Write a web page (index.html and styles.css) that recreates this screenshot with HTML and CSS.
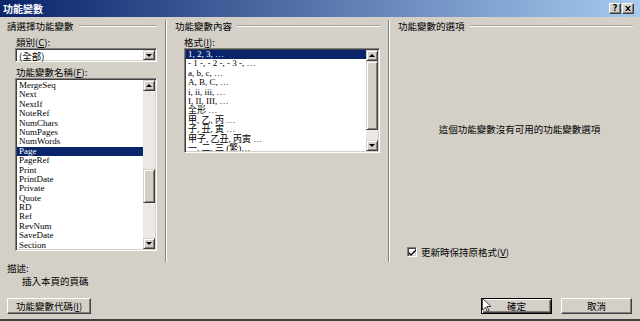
FILE: index.html
```html
<!DOCTYPE html>
<html lang="zh-Hant">
<head>
    <meta charset="UTF-8">
    <title>功能變數</title>
    <link rel="stylesheet" href="styles.css">
</head>
<body>
    <div class="dialog">
        <div class="titlebar">
            <span class="title">功能變數</span>
            <span class="cbtn cbtn-help">?</span>
            <span class="cbtn">
                <svg width="6" height="5" viewBox="0 0 6 5"><path d="M0 0h1.5l1.5 1.5l1.5-1.5h1.5l-2.2 2.5l2.2 2.5h-1.5l-1.5-1.5l-1.5 1.5h-1.5l2.2-2.5z" fill="#000"/></svg>
            </span>
        </div>

        <div class="panes">
            <!-- left: pick a field -->
            <section class="pane pane-pick">
                <div class="group-head"><span>請選擇功能變數</span><i class="etch"></i></div>
                <div class="field-label">類別(<u>C</u>):</div>
                <div class="combo well">
                    <span class="combo-text">(全部)</span>
                    <span class="sb-btn raised"><i class="arrow-down"></i></span>
                </div>
                <div class="field-label field-label-2">功能變數名稱(<u>F</u>):</div>
                <div class="listbox well names">
                    <ul class="items">
                        <li>MergeSeq</li>
                        <li>Next</li>
                        <li>NextIf</li>
                        <li>NoteRef</li>
                        <li>NumChars</li>
                        <li>NumPages</li>
                        <li>NumWords</li>
                        <li class="selected">Page</li>
                        <li>PageRef</li>
                        <li>Print</li>
                        <li>PrintDate</li>
                        <li>Private</li>
                        <li>Quote</li>
                        <li>RD</li>
                        <li>Ref</li>
                        <li>RevNum</li>
                        <li>SaveDate</li>
                        <li>Section</li>
                    </ul>
                    <div class="vscroll">
                        <span class="sb-btn raised"><i class="arrow-up"></i></span>
                        <span class="sb-track"><span class="sb-thumb raised thumb-names"></span></span>
                        <span class="sb-btn raised"><i class="arrow-down"></i></span>
                    </div>
                </div>
            </section>

            <div class="vsep"></div>

            <!-- middle: field properties -->
            <section class="pane pane-props">
                <div class="group-head"><span>功能變數內容</span><i class="etch"></i></div>
                <div class="field-label">格式(<u>I</u>):</div>
                <div class="listbox well formats">
                    <ul class="items">
                        <li class="selected">1, 2, 3, …</li>
                        <li>- 1 -, - 2 -, - 3 -, …</li>
                        <li>a, b, c, …</li>
                        <li>A, B, C, …</li>
                        <li>i, ii, iii, …</li>
                        <li>I, II, III, …</li>
                        <li>全形 …</li>
                        <li>甲, 乙, 丙 …</li>
                        <li>子, 丑, 寅 …</li>
                        <li>甲子, 乙丑, 丙寅 …</li>
                        <li>一, 二, 三 (繁)…</li>
                    </ul>
                    <div class="vscroll">
                        <span class="sb-btn raised"><i class="arrow-up"></i></span>
                        <span class="sb-track"><span class="sb-thumb raised thumb-formats"></span></span>
                        <span class="sb-btn raised"><i class="arrow-down"></i></span>
                    </div>
                </div>
            </section>

            <div class="vsep"></div>

            <!-- right: field options -->
            <section class="pane pane-opts">
                <div class="group-head"><span>功能變數的選項</span><i class="etch"></i></div>
                <p class="no-options">這個功能變數沒有可用的功能變數選項</p>
                <label class="check-row">
                    <span class="check well">
                        <svg width="7" height="7" viewBox="0 0 7 7"><path d="M0 3l2 2l5-5v2l-5 5l-2-2z" fill="#000"/></svg>
                    </span>
                    <span>更新時保持原格式(<u>V</u>)</span>
                </label>
            </section>
        </div>

        <div class="desc">
            <div>描述:</div>
            <div class="desc-text">插入本頁的頁碼</div>
        </div>

        <div class="actions">
            <span class="btn btn-codes"><span>功能變數代碼(<u>I</u>)</span></span>
            <span class="btn btn-default">確定</span>
            <span class="btn">取消</span>
        </div>

        <svg class="cursor" width="9" height="14" viewBox="0 0 12 19">
            <path d="M0.5 0.5v16l4-4l3 6l2-1l-3-6h5.5z" fill="#fff" stroke="#000" stroke-width="1"/>
        </svg>
    </div>
</body>
</html>
```

FILE: styles.css
```css
* {
    margin: 0;
    padding: 0;
    box-sizing: border-box;
}

body {
    background: #d4d0c8;
}

ul {
    list-style: none;
}

.dialog {
    position: relative;
    width: 640px;
    height: 321px;
    display: flex;
    flex-direction: column;
    background: #d4d0c8;
    border-bottom: 2px solid #404040;
    font-family: "Noto Sans CJK TC", "Liberation Sans", sans-serif;
    font-size: 9.5px;
    color: #000;
}

/* title bar */
.titlebar {
    flex: none;
    height: 17px;
    display: flex;
    align-items: center;
    padding: 0 6px 0 3px;
    background: linear-gradient(90deg, #0a246a 0%, #a6caf0 100%);
}

.title {
    flex: 1;
    color: #fff;
    font-weight: bold;
    font-size: 10px;
    line-height: 12px;
}

.cbtn {
    width: 12px;
    height: 11px;
    display: flex;
    align-items: center;
    justify-content: center;
    background: #d4d0c8;
    border: 1px solid;
    border-color: #fff #404040 #404040 #fff;
    box-shadow: inset -1px -1px #808080;
    font: bold 8px "DejaVu Sans", sans-serif;
    line-height: 1;
}

.cbtn-help {
    margin-right: 1px;
}

/* three panes */
.panes {
    flex: none;
    display: flex;
    height: 242px;
    margin-top: 3px;
}

.pane {
    display: flex;
    flex-direction: column;
    padding: 0 8px;
}

.pane-pick {
    width: 165px;
    padding-left: 7px;
}

.pane-props {
    width: 221px;
}

.pane-opts {
    flex: 1;
    padding-right: 7px;
}

.vsep {
    width: 0;
    border-left: 1px solid #808080;
    border-right: 1px solid #fff;
}

.group-head {
    display: flex;
    align-items: center;
    height: 12px;
    line-height: 12px;
    white-space: nowrap;
}

.etch {
    flex: 1;
    margin-left: 5px;
    border-top: 1px solid #a0a0a0;
    border-bottom: 1px solid #fff;
}

.field-label {
    margin: 5px 0 0 9px;
    line-height: 11px;
}

.field-label-2 {
    margin-top: 4px;
    line-height: 12px;
}

u {
    text-decoration: underline;
    text-underline-offset: 1px;
}

/* sunken field */
.well {
    background: #fff;
    border: 1px solid;
    border-color: #808080 #fff #fff #808080;
    padding: 1px;
    box-shadow: inset 1px 1px #404040, inset -1px -1px #d4d0c8;
}

.raised {
    background: #d4d0c8;
    border: 1px solid;
    border-color: #d4d0c8 #404040 #404040 #d4d0c8;
    box-shadow: inset 1px 1px #fff, inset -1px -1px #808080;
}

.combo {
    display: flex;
    align-items: center;
    height: 14px;
    margin-left: 8px;
}

.combo-text {
    flex: 1;
    padding: 1px 0 0 2px;
    line-height: 10px;
}

.sb-btn {
    flex: none;
    width: 12px;
    height: 11px;
    display: flex;
    align-items: center;
    justify-content: center;
}

.combo .sb-btn {
    height: 10px;
}

.arrow-up,
.arrow-down {
    width: 0;
    height: 0;
    border-left: 3px solid transparent;
    border-right: 3px solid transparent;
}

.arrow-up {
    border-bottom: 3px solid #000;
}

.arrow-down {
    border-top: 3px solid #000;
}

/* list boxes */
.listbox {
    display: flex;
    overflow: hidden;
}

.names {
    height: 173px;
    margin-left: 8px;
}

.formats {
    height: 105px;
    margin-left: 9px;
}

.items {
    flex: 1;
    overflow: hidden;
    font-family: "Liberation Serif", "Noto Sans CJK TC", serif;
    font-size: 9px;
}

.names .items {
    padding-top: 1px;
}

.items li {
    height: 9.4px;
    line-height: 9.4px;
    padding-left: 2px;
    white-space: nowrap;
}

.items li.selected {
    background: #0a246a;
    color: #fff;
}

.vscroll {
    flex: none;
    width: 12px;
    display: flex;
    flex-direction: column;
}

.sb-track {
    flex: 1;
    display: flex;
    flex-direction: column;
    background: #ebe9e4;
}

.sb-thumb {
    display: block;
}

.thumb-names {
    margin-top: 78px;
    height: 34px;
}

.thumb-formats {
    height: 69px;
}

/* options pane */
.no-options {
    margin-top: 91px;
    padding-left: 8px;
    line-height: 12px;
    text-align: center;
}

.check-row {
    display: flex;
    align-items: center;
    gap: 4px;
    margin: auto 0 4px 9px;
    line-height: 12px;
}

.check {
    width: 10px;
    height: 10px;
    display: flex;
    align-items: center;
    justify-content: center;
    padding: 0;
}

/* description */
.desc {
    padding-left: 7px;
    line-height: 12px;
}

.desc-text {
    margin-top: 1px;
    padding-left: 15px;
}

/* buttons */
.actions {
    display: flex;
    gap: 9px;
    margin-top: 11px;
    padding: 0 8px 0 7px;
}

.btn {
    width: 71px;
    height: 16px;
    display: flex;
    align-items: center;
    justify-content: center;
    background: #d4d0c8;
    border: 1px solid;
    border-color: #fff #404040 #404040 #fff;
    box-shadow: inset -1px -1px #808080;
    line-height: 12px;
}

.btn-codes {
    width: 84px;
    margin-right: auto;
}

.btn-default {
    border-color: #000;
    box-shadow: inset 1px 1px #fff, inset -1px -1px #404040, inset -2px -2px #808080;
}

.cursor {
    position: absolute;
    left: 482px;
    top: 298px;
}
```
